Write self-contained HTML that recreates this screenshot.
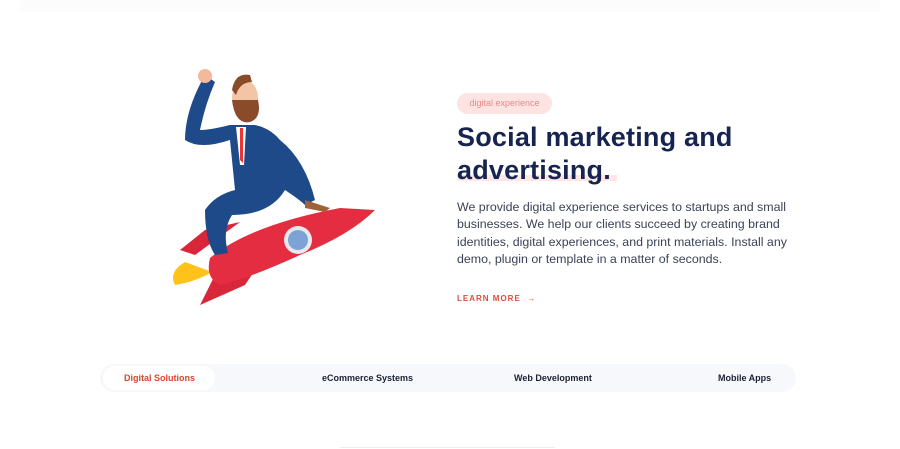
<!DOCTYPE html>
<html><head><meta charset="utf-8"><style>
*{margin:0;padding:0;box-sizing:border-box}
body{width:900px;height:449px;background:#fff;position:relative;overflow:hidden;font-family:"Liberation Sans",sans-serif}
.topbar{position:absolute;left:20px;top:0;width:860px;height:12px;background:#fcfcfd}
.badge{position:absolute;left:457px;top:93px;width:95px;height:21px;border-radius:11px;background:#fde3e2;color:#e58c86;font-size:9px;line-height:21px;text-align:center}
h1{position:absolute;left:457px;top:121px;font-size:27px;line-height:33px;color:#16244f;font-weight:bold;letter-spacing:0.2px}
.hl{position:absolute;left:457px;top:175px;width:160px;height:6px;background:#fde6e5}
p{position:absolute;left:457px;top:199px;width:330px;font-size:12.4px;line-height:17.4px;color:#3c4256}
.lm{position:absolute;left:457px;top:294px;font-size:8px;letter-spacing:1px;color:#d9503a;font-weight:bold}
.tabs{position:absolute;left:100px;top:364px;width:696px;height:28px;border-radius:14px;background:#f6f8fc}
.pill{position:absolute;left:103px;top:366px;width:112px;height:24px;border-radius:12px;background:#fff}
.t{position:absolute;top:373px;font-size:9px;font-weight:bold;color:#1c2133}
.line{position:absolute;left:340px;top:447px;width:215px;height:1px;background:#eee}
</style></head><body>
<div class="topbar"></div>
<svg style="position:absolute;left:0;top:0" width="420" height="320">
<path d="M185 262 Q168 272 175 285 Q195 282 212 272Z" fill="#ffc21a"/>
<path d="M195 255 L180 250 L205 230 L240 222Z" fill="#d8273a"/>
<path d="M215 275 L200 305 L245 285 L255 270Z" fill="#d8273a"/>
<path d="M210 258 Q250 225 340 208 L375 210 Q350 235 300 255 Q250 278 220 285 Q205 278 210 258Z" fill="#e42d40"/>
<circle cx="298" cy="240" r="14" fill="#e8e8ee"/><circle cx="298" cy="240" r="10" fill="#7da3d6"/>
<path d="M205 75 Q185 110 185 140 Q200 150 230 140 L235 190 Q215 195 205 210 Q205 240 215 255 L228 253 Q222 230 232 215 Q270 215 285 190 Q300 200 305 205 L315 200 Q305 160 280 140 Q270 128 255 125 L230 125 Q210 130 200 130 Q205 105 215 82Z" fill="#1e4a8a"/>
<circle cx="205" cy="76" r="7" fill="#f2b99a"/>
<ellipse cx="245" cy="98" rx="13" ry="18" fill="#f4c4a6"/>
<path d="M232 100 Q235 125 250 122 Q262 118 258 100Z" fill="#8a4b2a"/>
<path d="M232 90 Q235 72 250 75 L252 82 Q240 82 236 95Z" fill="#8a4b2a"/>
<path d="M236 127 L246 127 L244 165 L240 165Z" fill="#fff"/><path d="M240 128 L243 128 L243 163 L240 160Z" fill="#e33"/>
<path d="M305 200 L330 208 L325 212 L305 208Z" fill="#a0623b"/>
</svg>
<div class="badge">digital experience</div>
<div class="hl"></div>
<h1>Social marketing and<br>advertising.</h1>
<p>We provide digital experience services to startups and small businesses. We help our clients succeed by creating brand identities, digital experiences, and print materials. Install any demo, plugin or template in a matter of seconds.</p>
<div class="lm">LEARN MORE &nbsp;→</div>
<div class="tabs"></div><div class="pill"></div>
<div class="t" style="left:124px;color:#d9452e">Digital Solutions</div>
<div class="t" style="left:322px">eCommerce Systems</div>
<div class="t" style="left:514px">Web Development</div>
<div class="t" style="left:718px">Mobile Apps</div>
<div class="line"></div>
</body></html>
